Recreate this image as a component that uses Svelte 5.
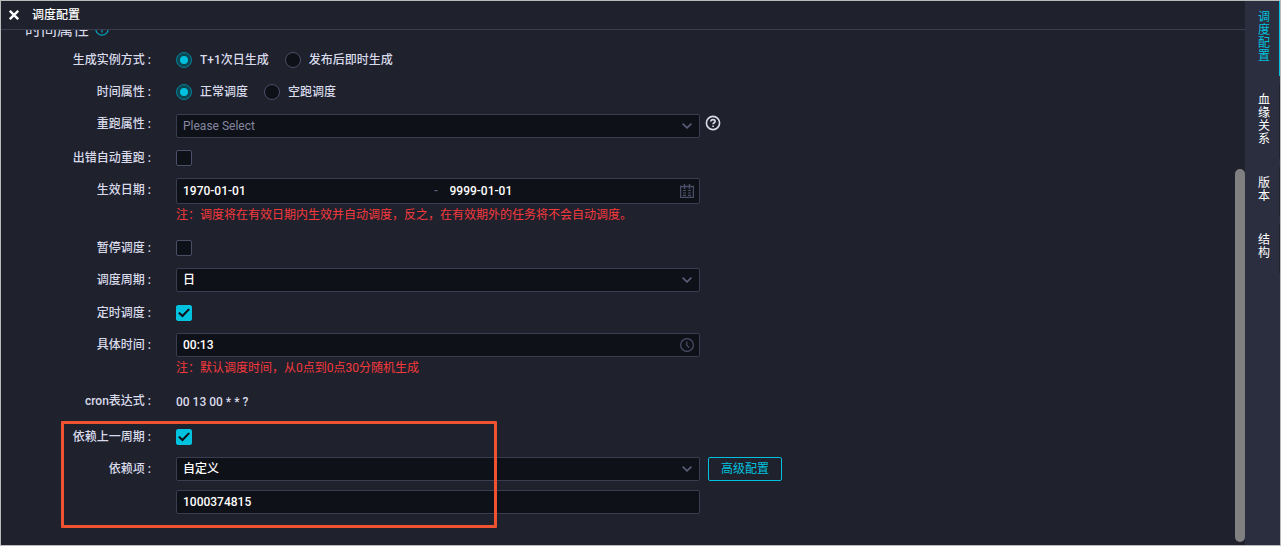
<script lang="ts">
	const tabs = ['调度配置', '血缘关系', '版本', '结构'];

	let activeTab = $state('调度配置');
	let instanceMode = $state('next');
	let scheduleType = $state('normal');
	let rerun = $state('');
	let autoRerun = $state(false);
	let startDate = $state('1970-01-01');
	let endDate = $state('9999-01-01');
	let paused = $state(false);
	let cycle = $state('日');
	let timed = $state(true);
	let time = $state('00:13');
	let dependsOnLast = $state(true);
	let dependency = $state('自定义');
	let nodeId = $state('1000374815');
</script>

{#snippet chevron()}
	<svg class="field-icon chevron" width="10" height="6" viewBox="0 0 10 6" fill="none" stroke="currentColor" stroke-width="1.6">
		<path d="M0.6 0.6 5 4.9 9.4 0.6" />
	</svg>
{/snippet}

<div class="app">
	<section class="panel">
		<header class="panel-header">
			<button class="close-btn" aria-label="关闭">
				<svg width="10" height="10" viewBox="0 0 10 10" stroke="currentColor" stroke-width="2.4">
					<path d="M.8.8 9.2 9.2M9.2.8.8 9.2" />
				</svg>
			</button>
			<h1>调度配置</h1>
		</header>

		<div class="panel-body">
			<h2>
				时间属性
				<svg width="14" height="14" viewBox="0 0 14 14" fill="none" stroke="currentColor" stroke-width="1.2">
					<circle cx="7" cy="7" r="6.2" />
					<path d="M7 6v4.4M7 3.4v1.2" />
				</svg>
			</h2>

			<form class="form" onsubmit={(e) => e.preventDefault()}>
				<div class="row" role="radiogroup" aria-labelledby="instance-label">
					<span class="label" id="instance-label">生成实例方式 :</span>
					<div class="control options">
						<label><input type="radio" name="instance" value="next" bind:group={instanceMode} />T+1次日生成</label>
						<label><input type="radio" name="instance" value="now" bind:group={instanceMode} />发布后即时生成</label>
					</div>
				</div>

				<div class="row" role="radiogroup" aria-labelledby="type-label">
					<span class="label" id="type-label">时间属性 :</span>
					<div class="control options">
						<label><input type="radio" name="type" value="normal" bind:group={scheduleType} />正常调度</label>
						<label><input type="radio" name="type" value="dry" bind:group={scheduleType} />空跑调度</label>
					</div>
				</div>

				<div class="row with-help">
					<label class="label" for="rerun">重跑属性 :</label>
					<div class="control field">
						<select id="rerun" class:placeholder={!rerun} bind:value={rerun}>
							<option value="">Please Select</option>
						</select>
						{@render chevron()}
					</div>
					<button class="help-btn" type="button" aria-label="帮助">
						<svg width="16" height="16" viewBox="0 0 16 16" fill="none" stroke="currentColor" stroke-width="1.6">
							<circle cx="8" cy="8" r="6.6" />
							<path d="M5.9 6.6C5.9 5.3 6.8 4.6 8 4.6s2.1.7 2.1 1.8c0 1.3-2 1.4-2 2.8M8.1 10.4v1.5" />
						</svg>
					</button>
				</div>

				<div class="row">
					<label class="label" for="auto-rerun">出错自动重跑 :</label>
					<div class="control options"><input id="auto-rerun" type="checkbox" bind:checked={autoRerun} /></div>
				</div>

				<div class="row">
					<label class="label" for="start-date">生效日期 :</label>
					<div class="control">
						<div class="field range">
							<input id="start-date" type="text" bind:value={startDate} />
							<span class="dash">-</span>
							<input class="range-end" type="text" aria-label="结束日期" bind:value={endDate} />
							<svg class="field-icon" width="14" height="14" viewBox="0 0 14 14" fill="none" stroke="currentColor">
								<path d="M.5 2.5h13v11H.5z" stroke-width="1.4" />
								<path d="M4.5 0v5M9.5 0v5" stroke-width="1.4" />
								<path d="M3 6.5h3M8 6.5h3M3 9h3M8 9h3M3 11.3h3M8 11.3h3" stroke-width="1.2" />
							</svg>
						</div>
						<p class="note">注：调度将在有效日期内生效并自动调度，反之，在有效期外的任务将不会自动调度。</p>
					</div>
				</div>

				<div class="row">
					<label class="label" for="paused">暂停调度 :</label>
					<div class="control options"><input id="paused" type="checkbox" bind:checked={paused} /></div>
				</div>

				<div class="row">
					<label class="label" for="cycle">调度周期 :</label>
					<div class="control stack">
						<div class="field">
							<select id="cycle" bind:value={cycle}>
								<option>日</option>
							</select>
							{@render chevron()}
						</div>
					</div>
				</div>

				<div class="row">
					<label class="label" for="timed">定时调度 :</label>
					<div class="control options"><input id="timed" type="checkbox" bind:checked={timed} /></div>
				</div>

				<div class="row">
					<label class="label" for="time">具体时间 :</label>
					<div class="control">
						<div class="field">
							<input id="time" type="text" bind:value={time} />
							<svg class="field-icon" width="14" height="14" viewBox="0 0 14 14" fill="none" stroke="currentColor" stroke-width="1.2">
								<circle cx="7" cy="7" r="6.4" />
								<path d="M6.8 3.4v3.8l2.4 2.4" />
							</svg>
						</div>
						<p class="note">注：默认调度时间，从0点到0点30分随机生成</p>
					</div>
				</div>

				<div class="row">
					<span class="label">cron表达式 :</span>
					<output class="control cron">00 13 00 * * ?</output>
				</div>

				<div class="highlighted">
					<div class="row">
						<label class="label" for="depends">依赖上一周期 :</label>
						<div class="control options"><input id="depends" type="checkbox" bind:checked={dependsOnLast} /></div>
					</div>

					<div class="row">
						<label class="label" for="dependency">依赖项 :</label>
						<div class="control stack">
							<div class="field">
								<select id="dependency" bind:value={dependency}>
									<option>自定义</option>
								</select>
								{@render chevron()}
							</div>
							<div class="field">
								<input type="text" aria-label="节点ID" bind:value={nodeId} />
							</div>
						</div>
						<button class="advanced-btn" type="button">高级配置</button>
					</div>
				</div>
			</form>
			<div class="scroll-thumb"></div>
		</div>
	</section>

	<nav class="tabs">
		{#each tabs as tab}
			<button class="tab" class:active={activeTab === tab} onclick={() => (activeTab = tab)}>{tab}</button>
		{/each}
	</nav>
</div>

<style>
	:global(body) {
		background: #1f212d;
	}

	.app {
		box-sizing: border-box;
		display: flex;
		height: 100vh;
		border: 1px solid #b9bbbb;
		background: #1f212d;
		color: #d9dbea;
		font: 500 12px/22px Roboto, 'Noto Sans CJK SC', sans-serif;
		overflow: hidden;
	}

	button,
	input,
	select {
		box-sizing: border-box;
		margin: 0;
		padding: 0;
		border: 0;
		background: none;
		color: inherit;
		font: inherit;
	}

	svg {
		display: block;
	}

	.panel {
		flex: 1;
		min-width: 0;
		display: flex;
		flex-direction: column;
	}

	.panel-header {
		display: flex;
		align-items: center;
		gap: 13px;
		height: 28px;
		padding-left: 8px;
		border-bottom: 1px solid #3a3c50;
		color: #fff;
	}

	h1 {
		margin: 0;
		font-size: 12px;
		font-weight: 500;
	}

	.panel-body {
		position: relative;
		flex: 1;
		min-height: 0;
		overflow: hidden;
	}

	h2 {
		display: flex;
		align-items: center;
		gap: 6px;
		margin: -12px 0 6px 24px;
		font-size: 16px;
		font-weight: 400;
		line-height: 24px;
	}

	h2 svg {
		margin-bottom: 2px;
		color: #00a5bf;
	}

	.form {
		display: flex;
		flex-direction: column;
		gap: 8px;
	}

	.row {
		display: grid;
		grid-template-columns: 150px minmax(0, 524px) auto;
		justify-content: start;
		align-items: start;
		column-gap: 25px;
	}

	.label {
		line-height: 24px;
		text-align: right;
	}

	.options {
		display: flex;
		align-items: center;
		gap: 16px;
		height: 24px;
	}

	.options label {
		display: flex;
		align-items: center;
		gap: 8px;
	}

	input[type='radio'],
	input[type='checkbox'] {
		appearance: none;
		display: grid;
		place-items: center;
		width: 16px;
		height: 16px;
		background: #0f1118;
		border: 1px solid #4c4e68;
	}

	input[type='radio'] {
		border-radius: 50%;
	}

	input[type='checkbox'] {
		border-radius: 2px;
	}

	input[type='radio']:checked {
		background: #0b4654;
		border-color: #058499;
	}

	input[type='radio']:checked::before {
		content: '';
		width: 8px;
		height: 8px;
		border-radius: 50%;
		background: #00c1de;
	}

	input[type='checkbox']:checked {
		background: #00c1de;
		border-color: #00c1de;
	}

	input[type='checkbox']:checked::before {
		content: '';
		width: 12px;
		height: 10px;
		background: #0f1118;
		clip-path: polygon(0 52%, 14% 40%, 37% 66%, 86% 4%, 100% 16%, 38% 96%);
	}

	.field {
		box-sizing: border-box;
		position: relative;
		display: flex;
		height: 24px;
		border: 1px solid #3a3c50;
		border-radius: 2px;
		background: #0f1118;
		color: #fff;
	}

	.field select,
	.field input {
		appearance: none;
		flex: 1;
		min-width: 0;
		height: 100%;
		padding: 0 6px;
		outline: 0;
	}

	.field select.placeholder {
		color: #8587a0;
		font-weight: 400;
	}

	.range {
		height: 26px;
	}

	.range .dash {
		width: 7px;
		color: #5a5c78;
		line-height: 24px;
		text-align: center;
	}

	.field .range-end {
		padding-left: 10px;
	}

	.field-icon {
		position: absolute;
		top: 50%;
		right: 5px;
		transform: translateY(-50%);
		color: #4c4e68;
		pointer-events: none;
	}

	.chevron {
		right: 7px;
		color: #5a5c78;
	}

	.with-help .field {
		margin-top: 2px;
	}

	.help-btn {
		margin: 3px 0 0 -20px;
	}

	.note {
		margin: 0 0 2px;
		color: #f5393c;
		font-weight: 400;
	}

	.stack {
		display: grid;
		gap: 9px;
		padding-bottom: 1px;
	}

	.cron {
		height: 28px;
		line-height: 26px;
	}

	.highlighted {
		position: relative;
		display: flex;
		flex-direction: column;
		gap: 8px;
	}

	.highlighted::after {
		content: '';
		position: absolute;
		box-sizing: border-box;
		top: -4px;
		bottom: -13px;
		left: 60px;
		width: 436px;
		border: 3px solid #ee5230;
		border-radius: 1px;
		pointer-events: none;
	}

	.advanced-btn {
		height: 24px;
		margin-left: -17px;
		padding: 0 12px;
		border: 1px solid #00c1de;
		border-radius: 2px;
		color: #00c1de;
		font-weight: 400;
	}

	.scroll-thumb {
		position: absolute;
		top: 139px;
		right: 0;
		bottom: 3px;
		width: 10px;
		border-radius: 5px;
		background: #808080;
	}

	.tabs {
		box-sizing: border-box;
		width: 35px;
		display: flex;
		flex-direction: column;
		gap: 8px;
		background: #2b2e3f;
	}

	.tab {
		padding: 10px 9px 13px 13px;
		border-right: 1px solid #1f212d;
		color: #fff;
		font-weight: 400;
		line-height: 13px;
		word-break: break-all;
	}

	.tab.active {
		border-color: #00c1de;
		color: #00c1de;
	}
</style>
